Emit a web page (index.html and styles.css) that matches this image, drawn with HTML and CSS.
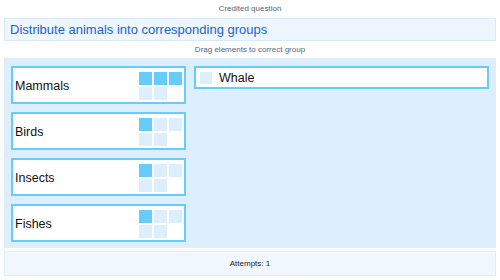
FILE: index.html
```html
<!DOCTYPE html>
<html lang="en">
<head>
    <meta charset="UTF-8">
    <title>Credited question</title>
    <link rel="stylesheet" href="styles.css">
</head>
<body>
    <div class="quiz">
        <div class="credit">Credited question</div>
        <div class="question">Distribute animals into corresponding groups</div>
        <div class="hint">Drag elements to correct group</div>

        <div class="board">
            <div class="groups">
                <div class="group">
                    <span class="group-name">Mammals</span>
                    <div class="slots">
                        <span class="slot filled"></span>
                        <span class="slot filled"></span>
                        <span class="slot filled"></span>
                        <span class="slot"></span>
                        <span class="slot"></span>
                    </div>
                </div>
                <div class="group">
                    <span class="group-name">Birds</span>
                    <div class="slots">
                        <span class="slot filled"></span>
                        <span class="slot"></span>
                        <span class="slot"></span>
                        <span class="slot"></span>
                        <span class="slot"></span>
                    </div>
                </div>
                <div class="group">
                    <span class="group-name">Insects</span>
                    <div class="slots">
                        <span class="slot filled"></span>
                        <span class="slot"></span>
                        <span class="slot"></span>
                        <span class="slot"></span>
                        <span class="slot"></span>
                    </div>
                </div>
                <div class="group">
                    <span class="group-name">Fishes</span>
                    <div class="slots">
                        <span class="slot filled"></span>
                        <span class="slot"></span>
                        <span class="slot"></span>
                        <span class="slot"></span>
                        <span class="slot"></span>
                    </div>
                </div>
            </div>

            <div class="pool">
                <div class="item">
                    <span class="slot"></span>
                    <span class="item-name">Whale</span>
                </div>
            </div>
        </div>

        <div class="attempts">Attempts: 1</div>
    </div>
</body>
</html>
```

FILE: styles.css
```css
body {
    margin: 0;
    font-family: "Liberation Sans", Arial, sans-serif;
    background-color: #fff;
    color: #111;
}
.quiz {
    padding: 0 4px;
}
.credit {
    height: 18px;
    line-height: 17px;
    text-align: center;
    font-size: 8px;
    color: #55657a;
}
.question {
    height: 23px;
    box-sizing: border-box;
    padding: 0 5px;
    line-height: 21px;
    font-size: 13px;
    color: #1b62cc;
    background-color: #eef6ff;
    border: 1px solid #d9eafb;
}
.hint {
    height: 17px;
    line-height: 17px;
    text-align: center;
    font-size: 8px;
    color: #55657a;
}
.board {
    display: flex;
    align-items: flex-start;
    gap: 8px;
    height: 190px;
    box-sizing: border-box;
    padding: 8px 7px 6px 7px;
    background-color: #ddeeff;
}
.groups {
    display: flex;
    flex-direction: column;
    gap: 8px;
    width: 175px;
}
.group {
    display: flex;
    justify-content: space-between;
    align-items: center;
    height: 38px;
    box-sizing: border-box;
    padding: 0 2px;
    background-color: #fff;
    border: 2px solid #66ccff;
}
.group-name {
    margin-top: 2px;
    font-size: 12.5px;
}
.slots {
    display: grid;
    grid-template-columns: repeat(3, 13px);
    grid-auto-rows: 13px;
    gap: 2px;
    align-self: flex-start;
    margin-top: 4px;
}
.slot {
    display: block;
    width: 13px;
    height: 13px;
    background-color: #ddeeff;
}
.slot.filled {
    background-color: #66ccff;
}
.pool {
    flex: 1;
}
.item {
    display: flex;
    align-items: center;
    gap: 7px;
    height: 23px;
    box-sizing: border-box;
    padding: 0 4px;
    background-color: #fff;
    border: 2px solid #66ccff;
}
.item .slot {
    width: 12px;
    height: 12px;
}
.item-name {
    margin-top: 1px;
    font-size: 12.5px;
}
.attempts {
    margin-top: 3px;
    height: 25px;
    box-sizing: border-box;
    line-height: 23px;
    text-align: center;
    font-size: 8px;
    color: #222;
    background-color: #f0f7ff;
    border: 1px solid #ddeeff;
}
```
